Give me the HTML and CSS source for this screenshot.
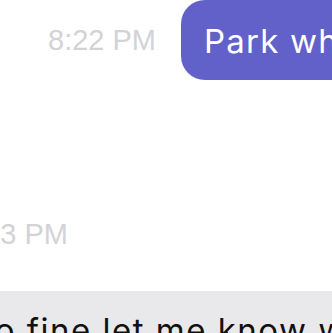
FILE: index.html
```html
<!DOCTYPE html>
<html lang="en">
<head>
    <meta charset="UTF-8">
    <meta name="viewport" content="width=device-width, initial-scale=1.0">
    <title>Messages</title>
    <link rel="stylesheet" href="styles.css">
</head>
<body>
    <div class="thread">
        <div class="row sent">
            <span class="time">8:22 PM</span>
            <div class="bubble out">Park where</div>
        </div>

        <div class="row stamp">
            <span class="time">8:23 PM</span>
        </div>

        <div class="row received">
            <div class="bubble in">So fine let me know when</div>
        </div>
    </div>
</body>
</html>
```

FILE: styles.css
```css
* {
    margin: 0;
    padding: 0;
    box-sizing: border-box;
}

body {
    background-color: #ffffff;
    font-family: 'Liberation Sans', Arial, sans-serif;
    width: 332px;
    height: 333px;
    overflow: hidden;
}

.thread {
    display: flex;
    flex-direction: column;
}

.row {
    display: flex;
    align-items: center;
    white-space: nowrap;
}

.time {
    color: #d3d3d5;
    font-size: 29px;
    line-height: 34px;
}

.sent {
    height: 80px;
    padding-left: 48px;
    gap: 25px;
}

.bubble {
    font-family: Inter, 'Liberation Sans', sans-serif;
    font-size: 33px;
    line-height: 44px;
    letter-spacing: 1.2px;
    flex-shrink: 0;
}

.out {
    background-color: #6261c9;
    color: #ffffff;
    height: 80px;
    padding: 19px 60px 0 23px;
    border-radius: 24px;
}

.stamp {
    margin-top: 137px;
    margin-left: -40px;
}

.received {
    margin-top: 40px;
}

.in {
    background-color: #e9e9eb;
    color: #111111;
    letter-spacing: 1.5px;
    margin-left: -38px;
    padding: 17px 40px 20px 10px;
    border-radius: 24px;
}
```
